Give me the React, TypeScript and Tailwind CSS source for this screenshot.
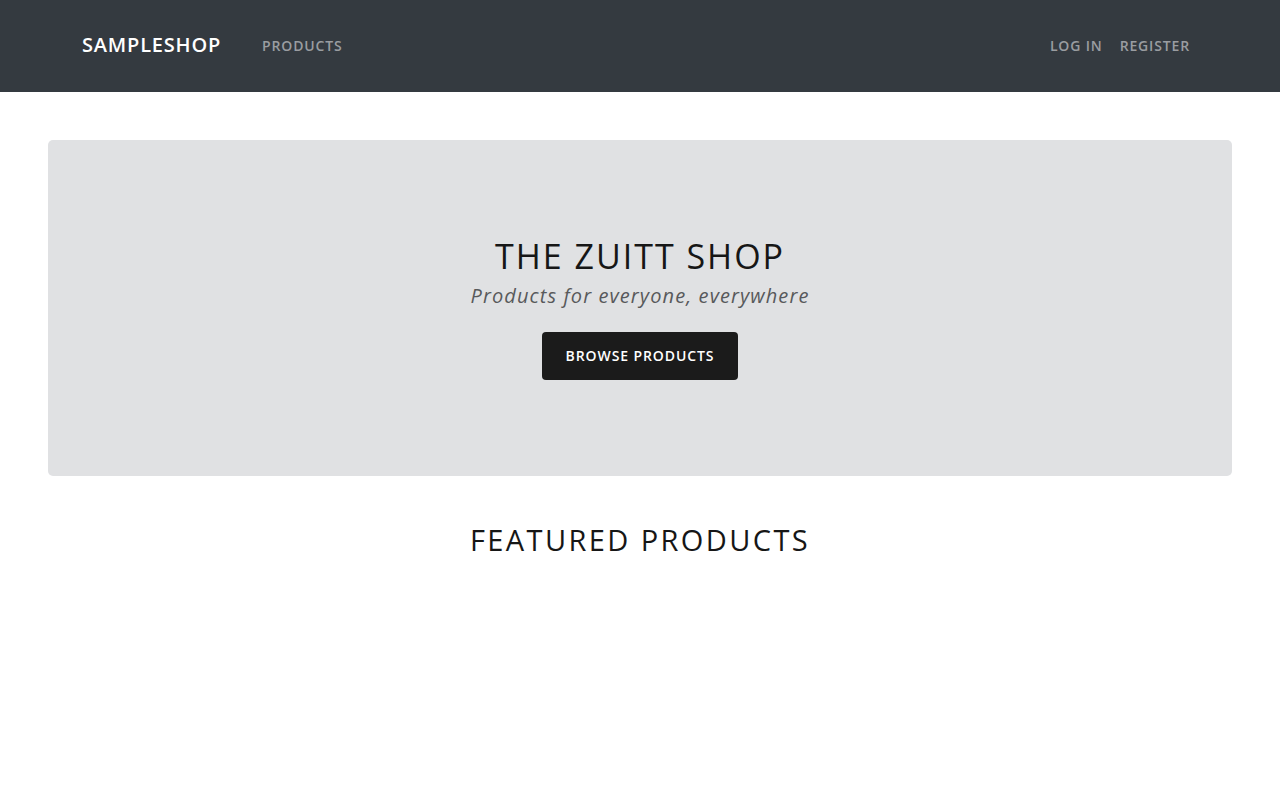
import React from "react";

export default function App() {
  return (
    <div className="min-h-[800px] bg-white" style={{ fontFamily: '"Open Sans", sans-serif' }}>
      <nav className="h-[92px] bg-[#343a40] flex items-center px-[82px]">
        <span className="text-white text-[20px] font-semibold uppercase tracking-[0.8px] -mt-[2px]">SampleShop</span>
        <a className="ml-[41px] text-[14px] font-semibold uppercase tracking-[0.85px] text-[#9a9da1] -mt-[2px]">Products</a>
        <div className="ml-auto mr-[8px] flex gap-[17px] -mt-[2px]">
          <a className="text-[14px] font-semibold uppercase tracking-[0.85px] text-[#9a9da1]">Log in</a>
          <a className="text-[14px] font-semibold uppercase tracking-[0.85px] text-[#9a9da1]">Register</a>
        </div>
      </nav>
      <main className="px-[48px] pt-[48px]">
        <section className="h-[336px] rounded-[5px] bg-[#e0e1e3] flex flex-col items-center justify-center text-center">
          <h1 className="text-[34px] font-normal uppercase tracking-[2px] text-[#161616] leading-[1.2]">The Zuitt Shop</h1>
          <p className="text-[20px] italic text-[#58595b] tracking-[1.1px] leading-[1.4] mt-[5px]">Products for everyone, everywhere</p>
          <button className="mt-[22px] h-[48px] w-[196px] rounded-[4px] bg-[#1b1b1b] text-white text-[14px] font-semibold uppercase tracking-[0.9px]">Browse Products</button>
        </section>
        <h2 className="mt-[42px] text-center text-[29px] font-normal uppercase tracking-[2.4px] text-[#161616]">Featured Products</h2>
      </main>
    </div>
  );
}
